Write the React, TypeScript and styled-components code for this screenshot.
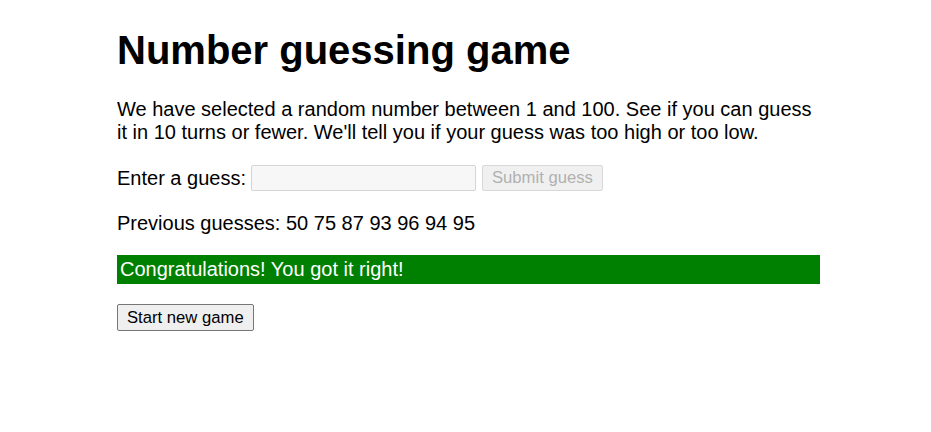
import React from "react"
import styled, { createGlobalStyle } from "styled-components"

const GlobalStyle = createGlobalStyle`
  html, body {
    margin: 0;
    padding: 0;
    background: #fff;
  }
  body {
    font-family: "Liberation Sans", Arial, sans-serif;
    color: #000;
  }
`

const Page = styled.div`
  width: 703px;
  margin-left: 117px;
  padding-top: 1px;
`

const Title = styled.h1`
  font-size: 40px;
  line-height: 46px;
  font-weight: bold;
  margin: 26px 0 25px;
`

const Text = styled.p`
  font-size: 20px;
  line-height: 23px;
  margin: 0 0 20px;
`

const Form = styled.div`
  display: flex;
  align-items: center;
  gap: 5px;
  height: 28px;
  margin: 0 0 20px;
  font-size: 20px;
`

const GuessField = styled.input`
  box-sizing: border-box;
  width: 225px;
  height: 26px;
  margin: 0;
  padding: 1px 3px;
  border: 1px solid #d5d5d5;
  border-radius: 2px;
  background: #f7f7f7;
  font: 16px "Liberation Sans", Arial, sans-serif;
`

const Button = styled.button<{ $disabled?: boolean }>`
  box-sizing: border-box;
  height: ${(p) => (p.$disabled ? "26px" : "27px")};
  margin: 0 0 0 ${(p) => (p.$disabled ? "1px" : "0")};
  padding: 0 9px;
  border: 1px solid ${(p) => (p.$disabled ? "#d8d8d8" : "#767676")};
  border-radius: 2px;
  background: ${(p) => (p.$disabled ? "#f0f0f0" : "#efefef")};
  color: ${(p) => (p.$disabled ? "#b0b0b0" : "#000")};
  font: 16.67px "Liberation Sans", Arial, sans-serif;
  white-space: nowrap;
`

const Result = styled.p`
  font-size: 20px;
  line-height: 23px;
  margin: 0 0 20px;
  padding: 3px;
  background: #008000;
  color: #fff;
`

const guesses = [50, 75, 87, 93, 96, 94, 95]

export default function App() {
  return (
    <Page>
      <GlobalStyle />
      <Title>Number guessing game</Title>
      <Text>
        We have selected a random number between 1 and 100. See if you can guess it in 10 turns
        or fewer. We'll tell you if your guess was too high or too low.
      </Text>
      <Form>
        <label htmlFor="guessField">Enter a guess:</label>
        <GuessField id="guessField" type="text" disabled />
        <Button $disabled disabled>
          Submit guess
        </Button>
      </Form>
      <Text>Previous guesses: {guesses.join(" ")}</Text>
      <Result>Congratulations! You got it right!</Result>
      <Button>Start new game</Button>
    </Page>
  )
}
